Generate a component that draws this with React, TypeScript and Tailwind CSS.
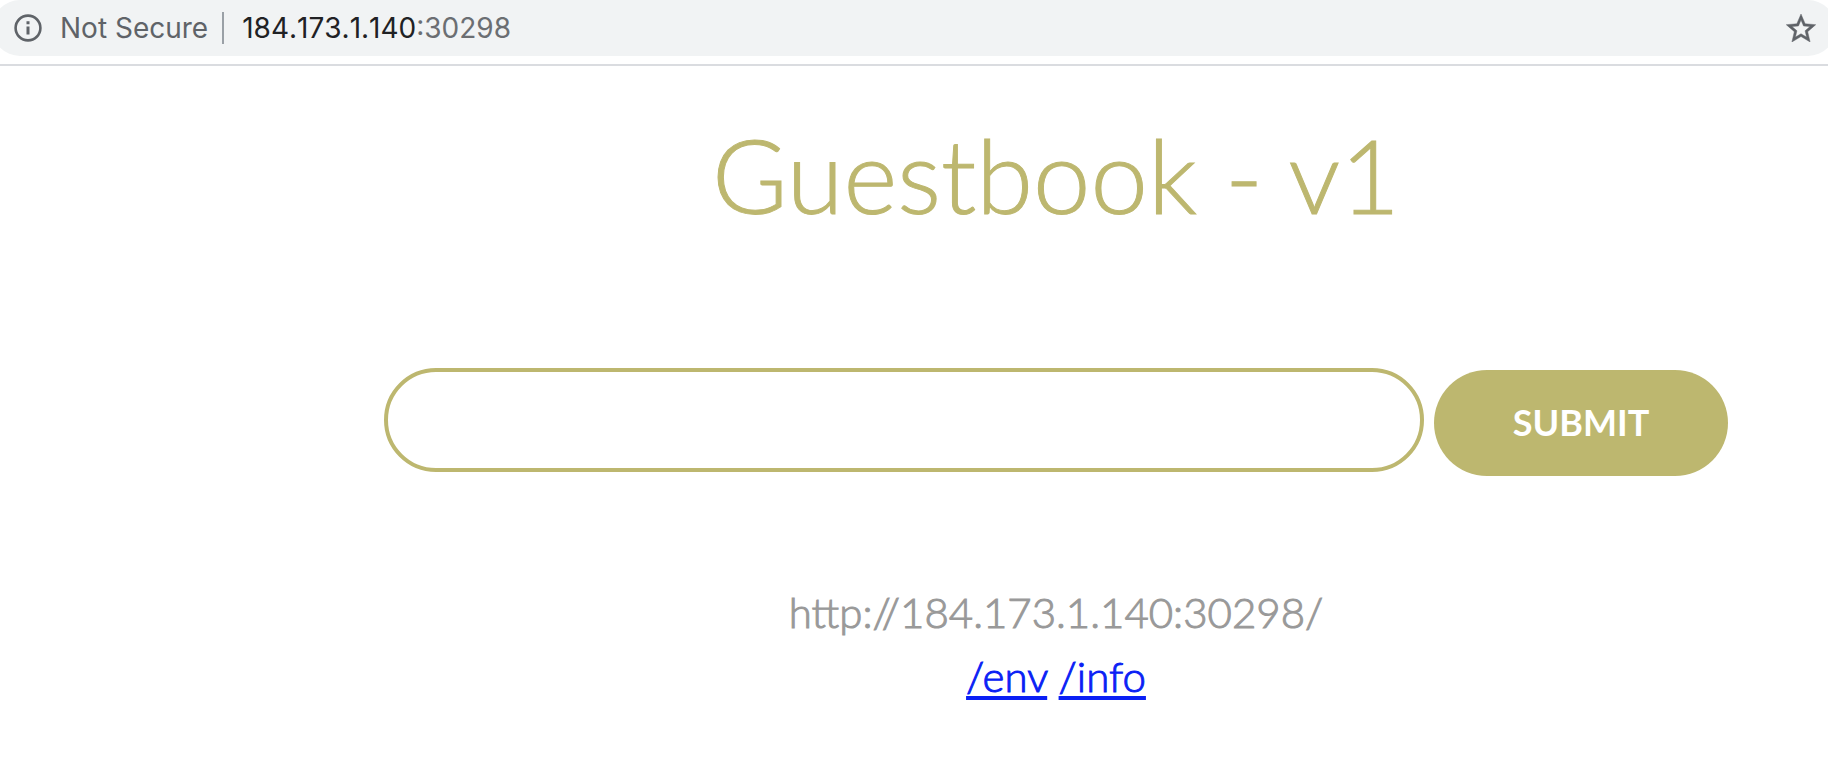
import { useState } from "react";

function InfoIcon() {
  return (
    <svg viewBox="0 0 28 28" className="size-7 shrink-0" fill="none" aria-hidden="true">
      <circle cx="14" cy="14" r="12.4" stroke="#5f6368" strokeWidth="2.6" />
      <path d="M12.5 7.3h3v3h-3zM12.5 12.6h3v8h-3z" fill="#5f6368" />
    </svg>
  );
}

function StarIcon() {
  return (
    <svg viewBox="2 2 20 19" className="h-7 w-[30px]" fill="#5f6368" stroke="#5f6368" strokeWidth="0.3" aria-hidden="true">
      <path d="M22 9.24l-7.19-.62L12 2 9.19 8.63 2 9.24l5.46 4.73L5.82 21 12 17.27 18.18 21l-1.63-7.03L22 9.24zM12 15.4l-3.76 2.27 1-4.28-3.32-2.88 4.38-.38L12 6.1l1.71 4.04 4.38.38-3.32 2.88 1 4.28L12 15.4z" />
    </svg>
  );
}

function AddressBar() {
  return (
    <header className="overflow-hidden border-b-2 border-[#dadce0] pb-2 font-['Inter',sans-serif] text-[28px] leading-8">
      <div className="-mx-2 flex h-14 items-center rounded-full bg-[#f1f3f4] pr-5 pl-[22px]">
        <InfoIcon />
        <span className="ml-[18px] text-[#5f6368]">Not Secure</span>
        <span className="mr-[18px] ml-3.5 h-8 w-0.5 bg-[#9aa0a6]" />
        <span className="flex-1 text-[#202124] [font-kerning:none]">
          184.173.1.140<span className="text-[#6b6e72]">:30298</span>
        </span>
        <button type="button" aria-label="Bookmark this page">
          <StarIcon />
        </button>
      </div>
    </header>
  );
}

export default function App() {
  const [entry, setEntry] = useState("");

  return (
    <div className="min-h-screen bg-white">
      <AddressBar />
      <main className="pr-[100px] pl-96 text-center font-['Lato',sans-serif] font-light">
        <h1 className="pt-11 text-[103px] leading-[128px] text-[#bdb76f] [-webkit-text-stroke:1px_#bdb76f]">
          Guestbook - v1
        </h1>
        <form className="mt-[130px] flex gap-2.5" onSubmit={(e) => e.preventDefault()}>
          <input
            type="text"
            aria-label="Guestbook entry"
            value={entry}
            onChange={(e) => setEntry(e.target.value)}
            className="h-[104px] min-w-0 flex-1 rounded-full border-4 border-[#bdb76f] bg-white px-10 text-4xl outline-none"
          />
          <button
            type="submit"
            className="mt-0.5 h-[106px] w-[294px] rounded-full bg-[#bdb76f] pb-0.5 text-4xl font-bold text-white"
          >
            SUBMIT
          </button>
        </form>
        <div className="mt-[104px] text-[42px] leading-[64px]">
          <p className="text-[#999999] [-webkit-text-stroke:1px_#999999]">http://184.173.1.140:30298/</p>
          <p className="text-[#0a1ff5] [-webkit-text-stroke:1px_#0a1ff5]">
            <a href="/env" className="underline decoration-4 underline-offset-4">/env</a>{" "}
            <a href="/info" className="underline decoration-4 underline-offset-4">/info</a>
          </p>
        </div>
      </main>
    </div>
  );
}
